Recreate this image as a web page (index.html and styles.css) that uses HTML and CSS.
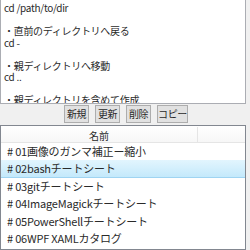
FILE: index.html
```html
<!DOCTYPE html>
<html>

<head>
     <title>Snippets</title>
     <link rel="stylesheet" href="styles.css">
</head>

<body>
     <div class="window">
          <div class="editor">
               <div class="editor-text">cd /path/to/dir

・直前のディレクトリへ戻る
cd -

・親ディレクトリへ移動
cd ..

・親ディレクトリを含めて作成</div>
          </div>
          <div class="toolbar">
               <button class="button">新規</button>
               <button class="button">更新</button>
               <button class="button">削除</button>
               <button class="button">コピー</button>
          </div>
          <div class="list">
               <div class="list-header">
                    <div class="col-name">名前</div>
                    <div class="col-rest"></div>
               </div>
               <div class="row"># 01画像のガンマ補正ー縮小</div>
               <div class="row selected"># 02bashチートシート</div>
               <div class="row"># 03gitチートシート</div>
               <div class="row"># 04ImageMagickチートシート</div>
               <div class="row"># 05PowerShellチートシート</div>
               <div class="row"># 06WPF XAMLカタログ</div>
          </div>
     </div>
</body>

</html>
```

FILE: styles.css
```css
body {
     margin: 0;
     background-color: #f0f0f0;
     font-family: "Noto Sans CJK JP", "Noto Sans", sans-serif;
     font-size: 11px;
     color: #2a2a2a;
}

.window {
     width: 250px;
     height: 250px;
     display: flex;
     flex-direction: column;
     overflow: hidden;
}

.editor {
     height: 103px;
     width: 244px;
     border: 1px solid #abadb3;
     border-top: none;
     background-color: #fff;
     overflow: hidden;
     flex-shrink: 0;
}

.editor-text {
     white-space: pre;
     font-size: 10px;
     letter-spacing: -0.3px;
     line-height: 11.5px;
     padding: 2px 0 0 3px;
}

.toolbar {
     display: flex;
     justify-content: center;
     gap: 6px;
     padding: 1px 0 0 2px;
     height: 20px;
     flex-shrink: 0;
}

.button {
     font-family: inherit;
     font-size: 10px;
     letter-spacing: -0.4px;
     height: 18px;
     padding: 0;
     min-width: 25px;
     border: 1px solid #adadad;
     background-color: #e1e1e1;
     color: #2a2a2a;
     line-height: 14px;
}

.list {
     width: 244px;
     flex: 1;
     border: 1px solid #828790;
     background-color: #fff;
}

.list-header {
     display: flex;
     height: 15px;
     padding-top: 1px;
     line-height: 18px;
     border-bottom: 1px solid #e5e5e5;
     background: linear-gradient(#fff, #f7f7f7);
}

.col-name {
     width: 196px;
     text-align: center;
     font-size: 10px;
     border-right: 1px solid #e5e5e5;
}

.col-rest {
     flex: 1;
}

.row {
     height: 17.4px;
     line-height: 17px;
     padding-left: 6px;
     letter-spacing: -0.2px;
     white-space: nowrap;
}

.row.selected {
     background: linear-gradient(#e2f5fe, #c4e9fb);
     border-bottom: 1px solid #9fd4f2;
     height: 16.4px;
}
```
